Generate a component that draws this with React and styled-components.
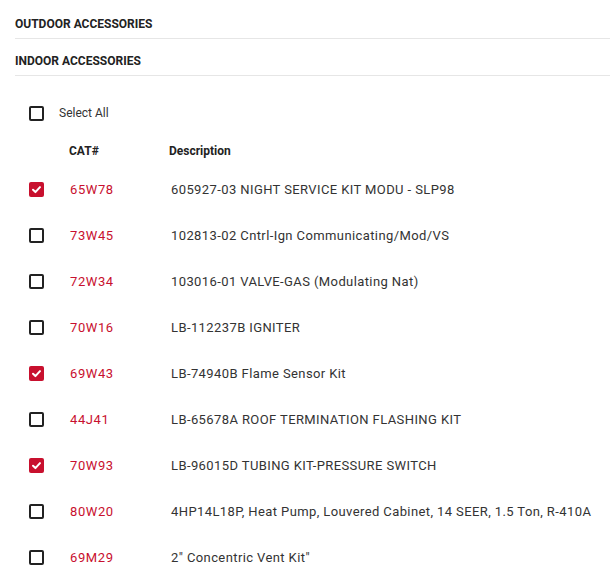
import styled, { createGlobalStyle } from "styled-components";

const GlobalStyle = createGlobalStyle`
  body {
    margin: 0;
    background: #fff;
    font-family: Roboto, "Liberation Sans", Arial, sans-serif;
    color: #333;
  }
`;

const Page = styled.div`
  padding: 2px 0 0 15px;
`;

const SectionHeader = styled.div`
  height: 37px;
  box-sizing: border-box;
  display: flex;
  align-items: flex-end;
  padding-bottom: 7px;
  border-bottom: 1px solid #e6e6e6;
  font-size: 12px;
  line-height: 14px;
  font-weight: 700;
  color: #222;
  text-transform: uppercase;
`;

const List = styled.div`
  margin-top: 14px;
  padding-left: 14px;
`;

const SelectAllRow = styled.label`
  height: 46px;
  display: flex;
  align-items: center;
  gap: 15px;
  font-size: 12px;
  color: #333;
`;

const Grid = styled.div`
  display: grid;
  grid-template-columns: 41px 101px 1fr;
  align-items: center;
  height: ${({ $head }) => ($head ? "30px" : "46px")};
`;

const HeadCell = styled.div`
  font-size: 12px;
  font-weight: 700;
  color: #222;
  margin-left: ${({ $offset }) => $offset || "0"};
`;

const Cat = styled.div`
  font-size: 13px;
  color: #c8102e;
  letter-spacing: 0.6px;
`;

const Desc = styled.div`
  font-size: 13px;
  color: #333;
  letter-spacing: 0.4px;
  white-space: nowrap;
`;

const Box = styled.span`
  width: 15px;
  height: 15px;
  box-sizing: border-box;
  border-radius: 2px;
  display: inline-flex;
  align-items: center;
  justify-content: center;
  border: ${({ $checked }) => ($checked ? "none" : "2px solid #222")};
  background: ${({ $checked }) => ($checked ? "#c8102e" : "#fff")};
`;

const Checkbox = ({ checked }) => (
  <Box $checked={checked}>
    {checked && (
      <svg width="11" height="11" viewBox="0 0 12 12">
        <path
          d="M2.2 6.3 L4.8 8.8 L9.8 3.4"
          fill="none"
          stroke="#fff"
          strokeWidth="2.2"
          strokeLinecap="round"
          strokeLinejoin="round"
        />
      </svg>
    )}
  </Box>
);

const items = [
  { cat: "65W78", desc: "605927-03 NIGHT SERVICE KIT MODU - SLP98", checked: true },
  { cat: "73W45", desc: "102813-02 Cntrl-Ign Communicating/Mod/VS" },
  { cat: "72W34", desc: "103016-01 VALVE-GAS (Modulating Nat)" },
  { cat: "70W16", desc: "LB-112237B IGNITER" },
  { cat: "69W43", desc: "LB-74940B Flame Sensor Kit", checked: true },
  { cat: "44J41", desc: "LB-65678A ROOF TERMINATION FLASHING KIT" },
  { cat: "70W93", desc: "LB-96015D TUBING KIT-PRESSURE SWITCH", checked: true },
  { cat: "80W20", desc: "4HP14L18P, Heat Pump, Louvered Cabinet, 14 SEER, 1.5 Ton, R-410A" },
  { cat: "69M29", desc: "2\" Concentric Vent Kit\"" },
];

export default function App() {
  return (
    <>
      <GlobalStyle />
      <Page>
        <SectionHeader>Outdoor Accessories</SectionHeader>
        <SectionHeader>Indoor Accessories</SectionHeader>
        <List>
          <SelectAllRow>
            <Checkbox />
            Select All
          </SelectAllRow>
          <Grid $head>
            <span />
            <HeadCell $offset="-1px">CAT#</HeadCell>
            <HeadCell $offset="-2px">Description</HeadCell>
          </Grid>
          {items.map((it) => (
            <Grid key={it.cat}>
              <Checkbox checked={it.checked} />
              <Cat>{it.cat}</Cat>
              <Desc>{it.desc}</Desc>
            </Grid>
          ))}
        </List>
      </Page>
    </>
  );
}
